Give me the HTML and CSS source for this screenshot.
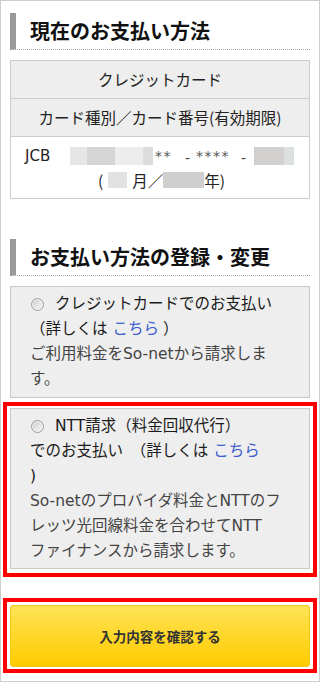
FILE: index.html
```html
<!DOCTYPE html>
<html lang="ja">
<head>
<meta charset="utf-8">
<title>お支払い方法</title>
<link rel="stylesheet" href="styles.css">
</head>
<body>
<div class="frame">
  <h2 class="heading">現在のお支払い方法</h2>
  <div class="current">
    <div class="row head">クレジットカード</div>
    <div class="row head">カード種別／カード番号(有効期限)</div>
    <div class="row detail">
      <div class="card-line"><span class="brand">JCB</span><span class="mask"><span class="m1"></span><span class="m2"></span><span class="m3"></span><span class="m4"></span></span><span class="stars s2">**</span><span class="dash">-</span><span class="stars s4">****</span><span class="dash dash-last">-</span><span class="mask"><span class="m5"></span><span class="m6"></span></span></div>
      <div class="exp-line">(<span class="blk blk-m"></span>月／<span class="blk blk-y"></span>年)</div>
    </div>
  </div>

  <h2 class="heading heading-2">お支払い方法の登録・変更</h2>

  <div class="option">
    <div class="label"><span class="radio"></span>クレジットカードでのお支払い</div>
    <div class="label">（詳しくは <a href="#" class="link">こちら</a> ）</div>
    <div class="desc">ご利用料金をSo-netから請求しま<br>す。</div>
  </div>

  <div class="highlight">
    <div class="option option-ntt">
      <div class="label"><span class="radio"></span>NTT請求（料金回収代行）</div>
      <div class="label">でのお支払い　（詳しくは <a href="#" class="link">こちら</a></div>
      <div class="label">)</div>
      <div class="desc">So-netのプロバイダ料金とNTTのフ<br>レッツ光回線料金を合わせてNTT<br>ファイナンスから請求します。</div>
    </div>
  </div>

  <div class="highlight highlight-btn">
    <button class="confirm" type="button">入力内容を確認する</button>
  </div>
</div>
</body>
</html>
```

FILE: styles.css
```css
html, body {
  margin: 0;
  padding: 0;
  background: #fff;
}

.frame {
  width: 320px;
  height: 682px;
  box-sizing: border-box;
  border: 1px solid #cdcdcd;
  background: #fff;
  font-family: "DejaVu Sans", "Noto Sans CJK JP", sans-serif;
  color: #222;
  overflow: hidden;
}

.heading {
  margin: 12px 9px 0 9px;
  height: 36px;
  line-height: 36px;
  padding-left: 14px;
  border-left: 6px solid #9a9a9a;
  border-bottom: 1px dotted #a8a8a8;
  font-family: "Noto Sans CJK JP", sans-serif;
  font-size: 20px;
  font-weight: 700;
  color: #111;
  white-space: nowrap;
}

.heading-2 {
  margin-top: 40px;
}

.current {
  margin: 10px 9px 0 9px;
  border: 1px solid #cccccc;
  font-size: 15.5px;
}

.row {
  text-align: center;
  border-bottom: 1px solid #cccccc;
}

.row:last-child {
  border-bottom: none;
}

.head {
  background: #eeeeee;
  height: 37px;
  line-height: 37px;
  color: #222;
  font-family: "Noto Sans CJK JP", sans-serif;
}

.detail {
  background: #fff;
  padding: 7px 0 6px 0;
  line-height: 24px;
  height: 48px;
}

.card-line {
  display: flex;
  align-items: center;
  height: 24px;
  padding-left: 14px;
  text-align: left;
}

.brand {
  width: 45px;
  flex: none;
  font-size: 15px;
}

.mask {
  display: flex;
  height: 18px;
  flex: none;
}

.mask span {
  display: block;
  height: 18px;
}

.m1 { width: 17px; background: #e6e6e6; }
.m2 { width: 28px; background: #d5d5d5; }
.m3 { width: 28px; background: #ececec; }
.m4 { width: 10px; background: #dcdcdc; }
.m5 { width: 30px; background: #d2cfcf; }
.m6 { width: 10px; background: #dde0e0; }

.stars {
  font-size: 14px;
  color: #555;
  letter-spacing: 1.5px;
  flex: none;
}

.s2 {
  margin-left: 2px;
  margin-right: 13px;
}

.s4 {
  margin-right: 11px;
}

.dash {
  font-size: 14px;
  color: #444;
  margin-right: 6px;
  position: relative;
  top: 2px;
}

.dash-last {
  margin-right: 8px;
}

.exp-line {
  height: 24px;
  display: flex;
  align-items: center;
  justify-content: center;
  font-family: "Noto Sans CJK JP", sans-serif;
  padding-left: 3px;
}

.blk {
  display: inline-block;
  height: 16px;
}

.blk-m {
  width: 19px;
  margin: 0 5px 0 5px;
  background: #e2e2e2;
}

.blk-y {
  width: 41px;
  background: #cfcfcf;
}

.option {
  margin: 10px 9px 0 9px;
  border: 1px solid #c8c8c8;
  background: #eeeeee;
  padding: 5px 6px 5px 19px;
  font-size: 15.5px;
  line-height: 25px;
}

.label {
  color: #1a1a1a;
  white-space: nowrap;
  display: flex;
  align-items: center;
}

.desc {
  color: #444;
  white-space: nowrap;
}

.radio {
  display: inline-block;
  width: 11px;
  height: 11px;
  border: 1px solid #9c9c9c;
  border-radius: 50%;
  background: linear-gradient(135deg, #c8c8c8 0%, #e4e4e4 50%, #f6f6f6 100%);
  box-shadow: inset 0 0 0 1px #f2f2f2;
  margin-left: 1px;
  margin-right: 11px;
  flex: none;
}

.link {
  color: #3a5ccc;
  text-decoration: none;
  margin: 0 4px 0 5px;
}

.highlight {
  margin: 4px 2px 0 2px;
  border: 4px solid #ff0000;
  padding: 2px 3px 4px 3px;
}

.highlight .option {
  margin: 0;
}

.option-ntt {
  padding-top: 5px;
  padding-bottom: 4px;
}

.highlight-btn {
  margin-top: 21px;
  padding: 3px 3px 2px 3px;
}

.confirm {
  display: block;
  width: 100%;
  height: 62px;
  margin: 0;
  border: 1px solid #f0c81a;
  border-radius: 3px;
  background: linear-gradient(to bottom, #ffe358 0%, #ffd72a 50%, #ffcb00 100%);
  font-family: "Noto Sans CJK JP", sans-serif;
  font-size: 13.5px;
  font-weight: 700;
  color: #333;
  cursor: pointer;
}
```
